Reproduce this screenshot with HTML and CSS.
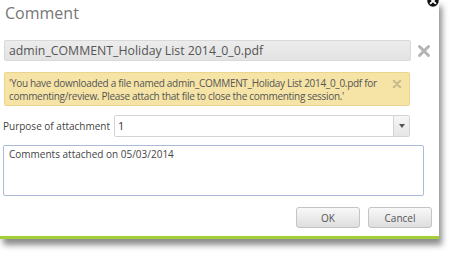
FILE: index.html
```html
<html>
<head>
    <link rel="stylesheet" href="styles.css">
    <title>Comment</title>
</head>
<body>
<div class="dialog">
    <span class="close_round">
        <svg width="14" height="14" viewBox="0 0 14 14">
            <circle cx="7" cy="7" r="6.3" fill="#111" stroke="#fff" stroke-width="1.2"/>
            <path d="M4.6 4.6 L9.4 9.4 M9.4 4.6 L4.6 9.4" stroke="#fff" stroke-width="1.8" stroke-linecap="round"/>
        </svg>
    </span>

    <h1 class="title">Comment</h1>

    <!-- file that was downloaded -->
    <div class="file_row">
        <input class="file_name" type="text" value="admin_COMMENT_Holiday List 2014_0_0.pdf" readonly>
        <span class="file_remove">
            <svg width="14" height="14" viewBox="0 0 14 14">
                <path d="M2.5 2.5 L11.5 11.5 M11.5 2.5 L2.5 11.5" stroke="#b3b3b3" stroke-width="3" stroke-linecap="round"/>
            </svg>
        </span>
    </div>

    <div class="alert">
        <p>'You have downloaded a file named admin_COMMENT_Holiday List 2014_0_0.pdf for commenting/review. Please attach that file to close the commenting session.'</p>
        <span class="alert_close">
            <svg width="10" height="10" viewBox="0 0 10 10">
                <path d="M1.8 1.8 L8.2 8.2 M8.2 1.8 L1.8 8.2" stroke="#c9bb8c" stroke-width="2.2" stroke-linecap="round"/>
            </svg>
        </span>
    </div>

    <div class="purpose_row">
        <label class="purpose_label">Purpose of attachment</label>
        <div class="purpose_select">
            <span class="purpose_value">1</span>
            <span class="purpose_arrow"><i></i></span>
        </div>
    </div>

    <textarea class="comments">Comments attached on 05/03/2014</textarea>

    <div class="buttons">
        <button type="button" class="btn">OK</button>
        <button type="button" class="btn">Cancel</button>
    </div>
</div>
</body>
</html>
```

FILE: styles.css
```css
body {
    margin: 0;
    background-color: white;
    font-family: "Open Sans", "Liberation Sans", sans-serif;
    color: #555;
}

.dialog {
    position: relative;
    width: 439px;
    height: 236px;
    background-color: white;
    border-bottom: 3px solid #a3d036;
    box-shadow: 3px 6px 6px rgba(0, 0, 0, 0.45);
}

.close_round {
    position: absolute;
    left: 426px;
    top: -6px;
    width: 14px;
    height: 14px;
}

.title {
    margin: 0;
    padding: 2px 0 0 5px;
    height: 40px;
    box-sizing: border-box;
    font-size: 16px;
    font-weight: normal;
    color: #777;
}

/*filename line*/
.file_row {
    display: flex;
    align-items: center;
    padding-left: 4px;
}

.file_name {
    width: 407px;
    height: 21px;
    box-sizing: border-box;
    margin: 0;
    padding: 0 0 0 4px;
    border: 1px solid #d9d9d9;
    border-radius: 2px;
    background: linear-gradient(#ececec, #e3e3e3);
    font-family: inherit;
    font-size: 12.3px;
    color: #555;
    outline: none;
}

.file_remove {
    display: flex;
    margin-left: 6px;
}

.alert {
    position: relative;
    margin: 11px 0 0 4px;
    width: 406px;
    height: 34px;
    box-sizing: border-box;
    padding: 4px 0 0 4px;
    background-color: #f6e4a6;
    border: 1px solid #ead58e;
    border-radius: 2px;
}

.alert p {
    margin: 0;
    width: 380px;
    font-size: 10px;
    line-height: 13px;
    letter-spacing: -0.3px;
    color: #555;
}

.alert_close {
    position: absolute;
    right: 7px;
    top: 6px;
    display: flex;
}

.purpose_row {
    display: flex;
    align-items: center;
    margin-top: 9px;
    padding-left: 3px;
}

.purpose_label {
    width: 111px;
    font-size: 10px;
    color: #444;
}

.purpose_select {
    display: flex;
    width: 296px;
    height: 22px;
    box-sizing: border-box;
    border: 1px solid #d4d4d4;
    border-radius: 2px;
    background-color: white;
}

.purpose_value {
    flex: 1;
    padding-left: 3px;
    font-size: 11px;
    line-height: 20px;
    color: #333;
}

.purpose_arrow {
    width: 15px;
    display: flex;
    align-items: center;
    justify-content: center;
    border-left: 1px solid #d4d4d4;
    background: linear-gradient(#f6f6f6, #e6e6e6);
}

.purpose_arrow i {
    width: 0;
    height: 0;
    border-left: 3px solid transparent;
    border-right: 3px solid transparent;
    border-top: 4px solid #555;
}

.comments {
    display: block;
    margin: 8px 0 0 3px;
    width: 421px;
    height: 51px;
    box-sizing: border-box;
    padding: 2px 5px;
    border: 1px solid #a9bbd8;
    border-radius: 2px;
    resize: none;
    font-family: inherit;
    font-size: 10px;
    line-height: 13px;
    color: #444;
    outline: none;
}

.buttons {
    display: flex;
    justify-content: flex-end;
    gap: 8px;
    margin-top: 11px;
    padding-right: 7px;
}

.btn {
    width: 64px;
    height: 21px;
    padding: 0;
    border: 1px solid #c4c4c4;
    border-radius: 3px;
    background: linear-gradient(#f8f8f8, #dedede);
    font-family: inherit;
    font-size: 10px;
    color: #555;
}
```
